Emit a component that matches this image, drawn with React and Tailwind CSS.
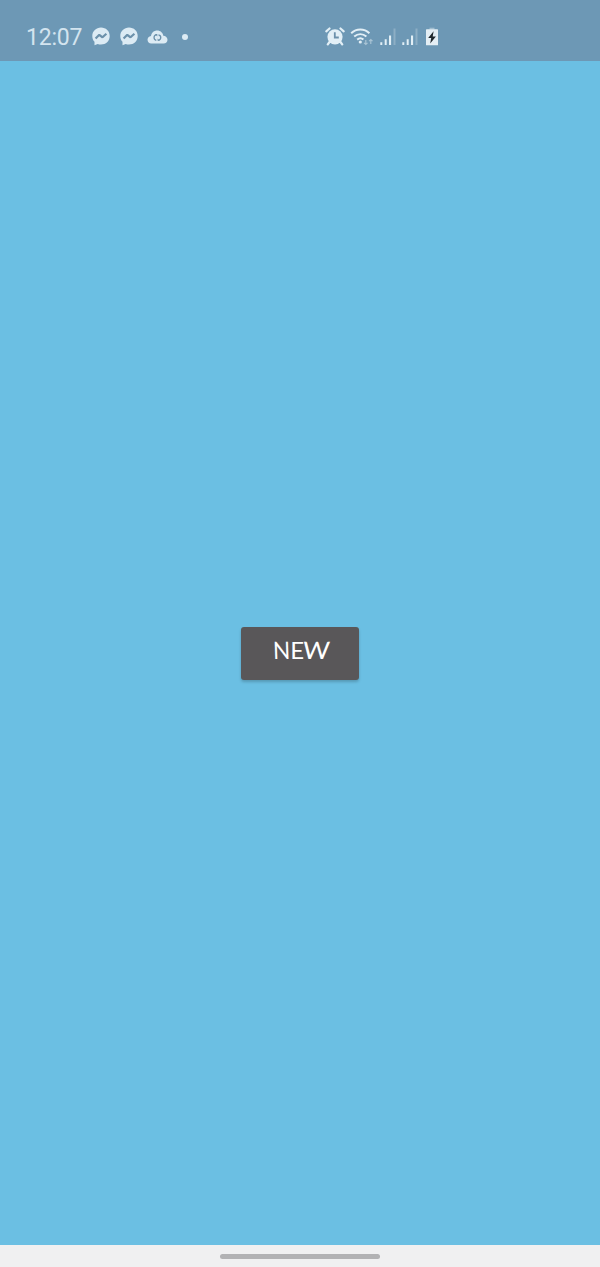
function Messenger() {
  return (
    <svg className="h-[19px] w-[18px] shrink-0" viewBox="0 0 18 19" fill="none">
      <path d="M9 .5C4.200.5.300 4.100.300 8.900c0 2.500.8 4.400 2.200 5.900v3.500l3.200-1.300c1 .4 2.200.5 3.300.5 4.900 0 8.700-3.500 8.700-8.500S13.900.5 9 .5Z" fill="#dcebf4" />
      <path d="m3.600 11.600 3.700-3.800 3.200 2.500 3.900-3.600" stroke="#6c91ab" strokeWidth="2.200" strokeLinejoin="bevel" />
    </svg>
  );
}

function CloudSync() {
  return (
    <svg className="h-[14px] w-[21px] shrink-0" viewBox="0 0 21 14" fill="none">
      <path d="M4.700 13.500A4 4 0 0 1 .5 9.800c0-2 1.400-3.500 3.500-3.800C4.500 2.700 7 .5 10.200.5c3.100 0 5.600 2.100 6.100 5.200 2.400.1 4.200 1.700 4.200 4 0 2.200-1.600 3.800-3.900 3.800H4.700Z" fill="#dcebf4" />
      <path d="M9.300 4.800C6.300 5.200 6.300 9.700 9.300 10.300M11.500 4.800c3 .5 3 5-.1 5.400" stroke="#6c91ab" strokeWidth="1.300" />
      <path d="m7.900 4 2.400.1v2.500zM12.900 10.900l-2.300-.2V8.500z" fill="#6c91ab" />
    </svg>
  );
}

function Alarm() {
  return (
    <svg className="h-[19px] w-5 shrink-0" viewBox="0 0 20 19" fill="none">
      <circle cx="10" cy="9.800" r="7.600" fill="#e2eff6" />
      <path d="m1.300 4.300 3.200-2.800M18.700 4.300l-3.200-2.800M4.500 15l-1.700 2.400M15.500 15l1.700 2.400" stroke="#e2eff6" strokeWidth="2.200" strokeLinecap="round" />
      <path d="M9.800 5.200v5.300h4" stroke="#6c91ab" strokeWidth="1.800" />
    </svg>
  );
}

function Wifi() {
  return (
    <svg className="h-[18px] w-6 shrink-0" viewBox="0 0 24 18" fill="none">
      <path d="M1.200 5.300c5.200-5 13-5 18.200 0M4.200 8.600c3.700-3.300 8.600-3.300 12.200 0M7.200 11.600c2-1.600 4.400-1.600 6.200 0" stroke="#e2eff6" strokeWidth="2" />
      <circle cx="10.300" cy="14" r="1.600" fill="#e2eff6" />
      <path d="M15.800 12v4.500m-1.700-1.700 1.700 1.700 1.700-1.700M20.800 16V11.500m-1.700 1.700 1.700-1.700 1.700 1.700" stroke="#a8c3d4" strokeWidth="1.200" />
    </svg>
  );
}

function Signal() {
  return (
    <svg className="h-[18px] w-4 shrink-0" viewBox="0 0 16 18">
      <path d="M.3 14.300h2V17h-2zM4.700 11.200h2V17h-2zM9 7.500h2.100V17H9z" fill="#e2eff6" />
      <path d="M13.500.5h2V17h-2z" fill="#8daec4" />
    </svg>
  );
}

function Battery() {
  return (
    <svg className="h-[19px] w-3 shrink-0" viewBox="0 0 12 19">
      <path d="M3.500.7h5v2h-5z" fill="#a1bed0" />
      <rect y="2.300" width="12" height="16" rx=".6" fill="#e4eef4" />
      <path d="M7.600 4.300 2.200 11h3l-1 5.500L9.900 9.400H6.700z" fill="#20282d" />
    </svg>
  );
}

export default function App() {
  return (
    <div className="flex h-[1267px] w-[600px] flex-col overflow-hidden bg-[#6bbfe3]">
      <header className="flex h-[61px] shrink-0 items-center bg-[#6d98b5] pt-3 pl-[26px]">
        <time className="w-[66px] pt-[2px] font-[Roboto,sans-serif] text-[23px] leading-7 tracking-[-0.2px] text-[#d3e4ef]">12:07</time>
        <div className="flex w-[233px] items-center">
          <Messenger />
          <div className="ml-[10px] flex"><Messenger /></div>
          <div className="ml-[9px] flex"><CloudSync /></div>
          <span className="ml-[14px] size-[6px] rounded-full bg-[#dcebf4]" />
        </div>
        <div className="flex items-center">
          <Alarm />
          <div className="ml-[5px] flex"><Wifi /></div>
          <div className="ml-[6px] flex gap-[6px]"><Signal /><Signal /></div>
          <div className="ml-2 flex"><Battery /></div>
        </div>
      </header>
      <main className="flex flex-1 items-center justify-center">
        <button className="flex h-[53px] w-[118px] items-center justify-center rounded-[3px] bg-[#595759] pb-[7px] font-[Lato,sans-serif] text-[24px] leading-none text-white shadow-[0_2px_3px_rgba(0,0,0,0.2)]">
          <span className="flex">
            <span className="-mr-[1px] block origin-left scale-x-[0.94] skew-x-[2deg]">N</span>
            <span className="block">E</span>
            <span className="-mr-px -ml-px block origin-left scale-x-[1.08] -skew-x-[4deg]">W</span>
          </span>
        </button>
      </main>
      <footer className="flex h-[22px] shrink-0 items-center justify-center bg-[#f0f0f1]">
        <div className="h-[5px] w-40 rounded-full bg-[#b2b2b4]" />
      </footer>
    </div>
  );
}
